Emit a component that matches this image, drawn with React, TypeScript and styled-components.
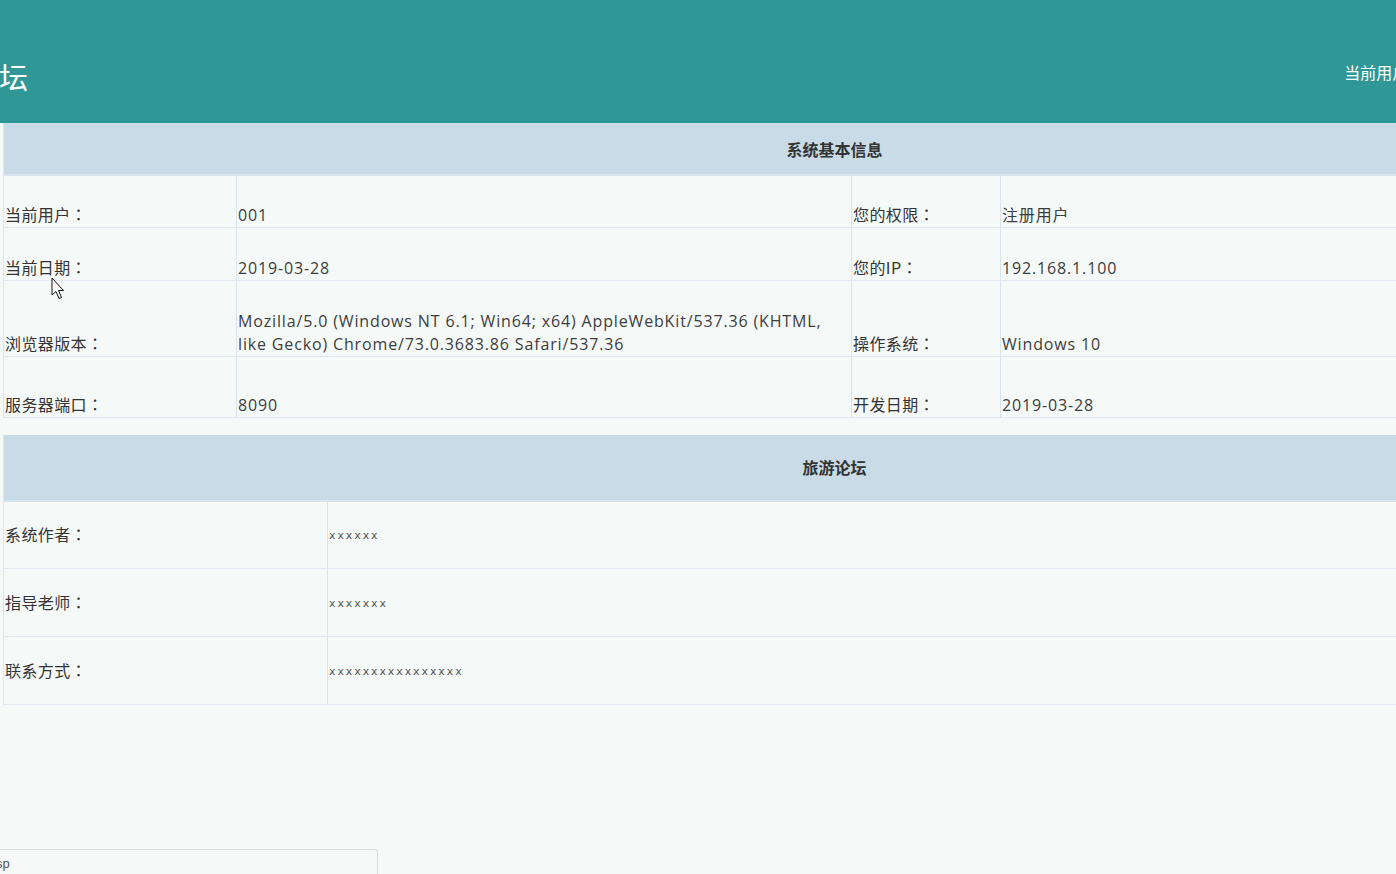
import React from 'react';
import styled, { createGlobalStyle } from 'styled-components';

interface InfoRow {
  height: number;
  cells: string[];
}

const GlobalStyle = createGlobalStyle`
  html, body {
    margin: 0;
    padding: 0;
    background: #f5f9f8;
  }
`;

const Viewport = styled.div`
  position: relative;
  width: 1396px;
  height: 874px;
  overflow: hidden;
  background: #f5f9f8;
  font-family: "Noto Sans", "Noto Sans CJK SC", sans-serif;
`;

const Header = styled.header`
  display: flex;
  align-items: center;
  justify-content: space-between;
  height: 123px;
  padding-top: 28px;
  box-sizing: border-box;
  background: #2f9896;
  color: #ffffff;
`;

const SiteTitle = styled.h1`
  margin: 0 0 0 -88px;
  font-family: "Liberation Serif", "Noto Sans CJK SC", serif;
  font-size: 29px;
  font-weight: 400;
  white-space: nowrap;
`;

const UserInfo = styled.div`
  margin-right: -55px;
  font-family: "Noto Sans CJK TC", sans-serif;
  font-size: 16px;
  white-space: nowrap;
  transform: translateY(-4px);
`;

const Content = styled.div`
  width: 1662px;
  margin-left: 3px;
`;

const Table = styled.table<{ $gap?: number }>`
  width: 100%;
  border-collapse: collapse;
  table-layout: fixed;
  margin-top: ${({ $gap }) => $gap ?? 0}px;
  border-left: 1px solid #dde6ee;
`;

const HeadCell = styled.th<{ $height: number }>`
  height: ${({ $height }) => $height}px;
  padding: 0;
  background: #c8dbe6;
  color: #333;
  font-family: "Noto Sans CJK SC", sans-serif;
  font-size: 16px;
  font-weight: 700;
  text-align: center;
  border-bottom: 2px solid #d8e5ef;
`;

const Row = styled.tr<{ $height: number }>`
  height: ${({ $height }) => $height}px;
  border-bottom: 1px solid #dfe7ee;
`;

const Cell = styled.td<{ $middle?: boolean }>`
  padding: 0 0 0 1px;
  vertical-align: ${({ $middle }) => ($middle ? 'middle' : 'bottom')};
  border-left: 1px solid #d9e4ef;
  color: #3a3a3a;
  line-height: 23px;
  &:first-child {
    border-left: none;
  }
`;

const Label = styled.span`
  font-family: "Noto Sans CJK TC", sans-serif;
  font-size: 16px;
  letter-spacing: 0.4px;
  color: #333;
`;

const Value = styled.span`
  font-family: "Open Sans", "Noto Sans CJK SC", sans-serif;
  font-size: 16px;
  letter-spacing: 0.85px;
  color: #3d3d3d;
`;

const Masked = styled.span`
  font-family: "DejaVu Sans", sans-serif;
  font-size: 11px;
  letter-spacing: 1.9px;
  color: #555;
`;

const StatusBubble = styled.div`
  position: absolute;
  left: 0;
  bottom: 0;
  width: 378px;
  height: 25px;
  box-sizing: border-box;
  padding: 6px 0 0 0;
  background: #f7f9f9;
  border-top: 1px solid #dcdcdc;
  border-right: 1px solid #dcdcdc;
  border-top-right-radius: 3px;
  font-family: "Liberation Sans", sans-serif;
  font-size: 13px;
  color: #555;
  overflow: hidden;
  white-space: nowrap;
`;

const StatusText = styled.span`
  margin-left: -4px;
`;

const Cursor = styled.svg`
  position: absolute;
  left: 51px;
  top: 277px;
`;

const systemRows: InfoRow[] = [
  { height: 52, cells: ['当前用户：', '001', '您的权限：', '注册用户'] },
  { height: 53, cells: ['当前日期：', '2019-03-28', '您的IP：', '192.168.1.100'] },
  {
    height: 76,
    cells: [
      '浏览器版本：',
      'Mozilla/5.0 (Windows NT 6.1; Win64; x64) AppleWebKit/537.36 (KHTML, like Gecko) Chrome/73.0.3683.86 Safari/537.36',
      '操作系统：',
      'Windows 10',
    ],
  },
  { height: 61, cells: ['服务器端口：', '8090', '开发日期：', '2019-03-28'] },
];

const aboutRows = [
  { label: '系统作者：', value: 'xxxxxx' },
  { label: '指导老师：', value: 'xxxxxxx' },
  { label: '联系方式：', value: 'xxxxxxxxxxxxxxxx' },
];

const App: React.FC = () => (
  <Viewport>
    <GlobalStyle />
    <Header>
      <SiteTitle>旅游论坛</SiteTitle>
      <UserInfo>当前用户：001</UserInfo>
    </Header>

    <Content>
      <Table>
        <colgroup>
          <col style={{ width: 233 }} />
          <col style={{ width: 615 }} />
          <col style={{ width: 149 }} />
          <col />
        </colgroup>
        <thead>
          <tr>
            <HeadCell colSpan={4} $height={51}>系统基本信息</HeadCell>
          </tr>
        </thead>
        <tbody>
          {systemRows.map((row) => (
            <Row key={row.cells[0]} $height={row.height}>
              <Cell><Label>{row.cells[0]}</Label></Cell>
              <Cell><Value>{row.cells[1]}</Value></Cell>
              <Cell><Label>{row.cells[2]}</Label></Cell>
              <Cell><Value>{row.cells[3]}</Value></Cell>
            </Row>
          ))}
        </tbody>
      </Table>

      <Table $gap={17}>
        <colgroup>
          <col style={{ width: 324 }} />
          <col />
        </colgroup>
        <thead>
          <tr>
            <HeadCell colSpan={2} $height={65}>旅游论坛</HeadCell>
          </tr>
        </thead>
        <tbody>
          {aboutRows.map((row) => (
            <Row key={row.label} $height={68}>
              <Cell $middle><Label>{row.label}</Label></Cell>
              <Cell $middle><Masked>{row.value}</Masked></Cell>
            </Row>
          ))}
        </tbody>
      </Table>
    </Content>

    <Cursor width="14" height="24" viewBox="0 0 14 24">
      <path
        d="M1 1 L1 18 L5 14.5 L8 21.5 L10.5 20.5 L7.5 13.5 L12.5 13.5 Z"
        fill="#ffffff"
        stroke="#111"
        strokeWidth="1"
        strokeLinejoin="round"
      />
    </Cursor>

    <StatusBubble>
      <StatusText>sp</StatusText>
    </StatusBubble>
  </Viewport>
);

export default App;
